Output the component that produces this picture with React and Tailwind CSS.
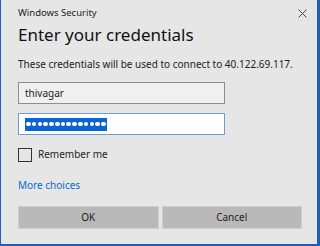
import React from 'react';

const App = () => {
  return (
    <div className="w-[320px] h-[246px] bg-[#1c5fb8] overflow-hidden" style={{ fontFamily: '"Segoe UI", "Noto Sans", "Liberation Sans", sans-serif' }}>
      <div className="ml-[1px] mr-[3px] h-[244px] bg-[#e6e6e6] flex flex-col px-[17px] text-[#1a1a1a]">
        {/* title bar */}
        <div className="flex items-center justify-between h-[26px] pt-[1px]">
          <span className="text-[9.5px] text-[#222]">Windows Security</span>
          <svg width="9" height="9" viewBox="0 0 9 9" className="mr-[-7px]">
            <path d="M0.5 0.5 L8.5 8.5 M8.5 0.5 L0.5 8.5" stroke="#444" strokeWidth="1" />
          </svg>
        </div>

        <div className="text-[17px] leading-[20px] mt-[-1px] text-[#111]">Enter your credentials</div>

        <div className="text-[10px] leading-[15px] mt-[12px] text-[#222]">
          These credentials will be used to connect to 40.122.69.117.
        </div>

        {/* username */}
        <div className="mt-[10px] w-[207px] h-[22px] border border-[#8e8e8e] bg-[#f0f0f0] flex items-center px-[6px] text-[10px] text-[#222]">
          thivagar
        </div>

        {/* password */}
        <div className="mt-[9px] w-[207px] h-[22px] border border-[#6f9bd6] bg-white flex items-center px-[6px]">
          <span className="bg-[#0a64d6] h-[13px] flex items-center px-[1px] gap-[1.2px]">
            {Array.from({ length: 14 }).map((_, i) => (
              <span key={i} className="w-[4.6px] h-[4.6px] rounded-full bg-white" />
            ))}
          </span>
        </div>

        {/* remember me */}
        <div className="mt-[12px] h-[15px] flex items-center gap-[6px]">
          <span className="w-[14px] h-[14px] border-[1.5px] border-[#333] bg-[#e6e6e6]" />
          <span className="text-[10px] text-[#222]">Remember me</span>
        </div>

        <div className="mt-[16px] text-[10px] leading-[15px] text-[#0b6acb]">More choices</div>

        {/* buttons */}
        <div className="mt-[13px] flex gap-[3px] w-[284px]">
          <button className="flex-1 h-[23px] bg-[#b9b9b9] border border-[#cfcfcf] text-[10px] text-[#222]">OK</button>
          <button className="flex-1 h-[23px] bg-[#b9b9b9] border border-[#cfcfcf] text-[10px] text-[#222]">Cancel</button>
        </div>
      </div>
    </div>
  );
};

export default App;
